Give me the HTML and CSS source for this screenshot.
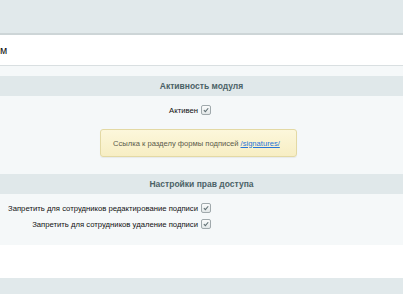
FILE: index.html
```html
<!DOCTYPE html>
<html>
<head>
<meta charset="utf-8">
<link rel="stylesheet" href="styles.css">
</head>
<body>
<div class="top"></div>
<div class="tabbar"><span class="tabtitle">м</span></div>
<div class="content">
  <div class="heading">Активность модуля</div>
  <div class="row first">
    <div class="label">Активен</div>
    <div class="field"><span class="cb"><svg viewBox="0 0 10 10" width="10" height="10"><path d="M2.3 5.2 L4.2 7.1 L7.8 2.8" fill="none" stroke="#5f6f73" stroke-width="1.3"/></svg></span></div>
  </div>
  <div class="notewrap">
    <div class="note">Ссылка к разделу формы подписей <a href="#">/signatures/</a></div>
  </div>
  <div class="heading">Настройки прав доступа</div>
  <div class="rows">
    <div class="row">
      <div class="label">Запретить для сотрудников редактирование подписи</div>
      <div class="field"><span class="cb"><svg viewBox="0 0 10 10" width="10" height="10"><path d="M2.3 5.2 L4.2 7.1 L7.8 2.8" fill="none" stroke="#5f6f73" stroke-width="1.3"/></svg></span></div>
    </div>
    <div class="row">
      <div class="label">Запретить для сотрудников удаление подписи</div>
      <div class="field"><span class="cb"><svg viewBox="0 0 10 10" width="10" height="10"><path d="M2.3 5.2 L4.2 7.1 L7.8 2.8" fill="none" stroke="#5f6f73" stroke-width="1.3"/></svg></span></div>
    </div>
  </div>
</div>
<div class="spacer"></div>
<div class="bottom"></div>
</body>
</html>
```
FILE: styles.css
```css
html, body {
  margin: 0;
  padding: 0;
}
body {
  font-family: "Liberation Sans", Arial, sans-serif;
  background: #ffffff;
  width: 403px;
  height: 294px;
  overflow: hidden;
  color: #000;
}
.top {
  height: 33px;
  background: #e1e9eb;
  border-bottom: 2px solid #cdd5d7;
}
.tabbar {
  height: 30px;
  background: #ffffff;
  border-bottom: 1px solid #d9dfe1;
  display: flex;
  align-items: center;
}
.tabtitle {
  font-size: 10.5px;
  margin-left: 0;
  color: #111;
}
.content {
  background: #f5f8f9;
  padding-top: 10px;
  padding-bottom: 13px;
}
.heading {
  height: 20px;
  line-height: 20px;
  background: #e0e8ea;
  color: #4b6267;
  font-size: 8.5px;
  font-weight: bold;
  text-align: center;
}
.row {
  display: grid;
  grid-template-columns: 198px 1fr;
  column-gap: 3px;
  align-items: center;
  height: 16px;
}
.row.first {
  margin-top: 6px;
}
.label {
  text-align: right;
  font-size: 7.7px;
  color: #111;
  white-space: nowrap;
}
.field {
  display: flex;
  align-items: center;
}
.cb {
  width: 10px;
  height: 10px;
  box-sizing: border-box;
  border: 1px solid #a0a9ac;
  border-radius: 2px;
  background: linear-gradient(#fbfcfc, #e2e7e8);
  display: flex;
  align-items: center;
  justify-content: center;
}
.cb svg {
  width: 8px;
  height: 8px;
}
.notewrap {
  display: flex;
  justify-content: flex-start;
  padding-left: 100px;
  margin-top: 11px;
  margin-bottom: 17px;
}
.note {
  width: 197px;
  height: 28px;
  box-sizing: border-box;
  border: 1px solid #e3d9a4;
  border-radius: 3px;
  background: linear-gradient(#fcf7db, #f7eec4);
  box-shadow: 0 1px 1px rgba(0,0,0,0.06);
  font-size: 7.6px;
  color: #5a5a4a;
  display: flex;
  align-items: center;
  padding-left: 12px;
  white-space: nowrap;
}
.note a {
  color: #2675d7;
  text-decoration: underline;
  margin-left: 2px;
}
.rows {
  padding-top: 6px;
}
.spacer {
  height: 33px;
  background: #ffffff;
}
.bottom {
  height: 20px;
  background: #e1e9eb;
}
```
